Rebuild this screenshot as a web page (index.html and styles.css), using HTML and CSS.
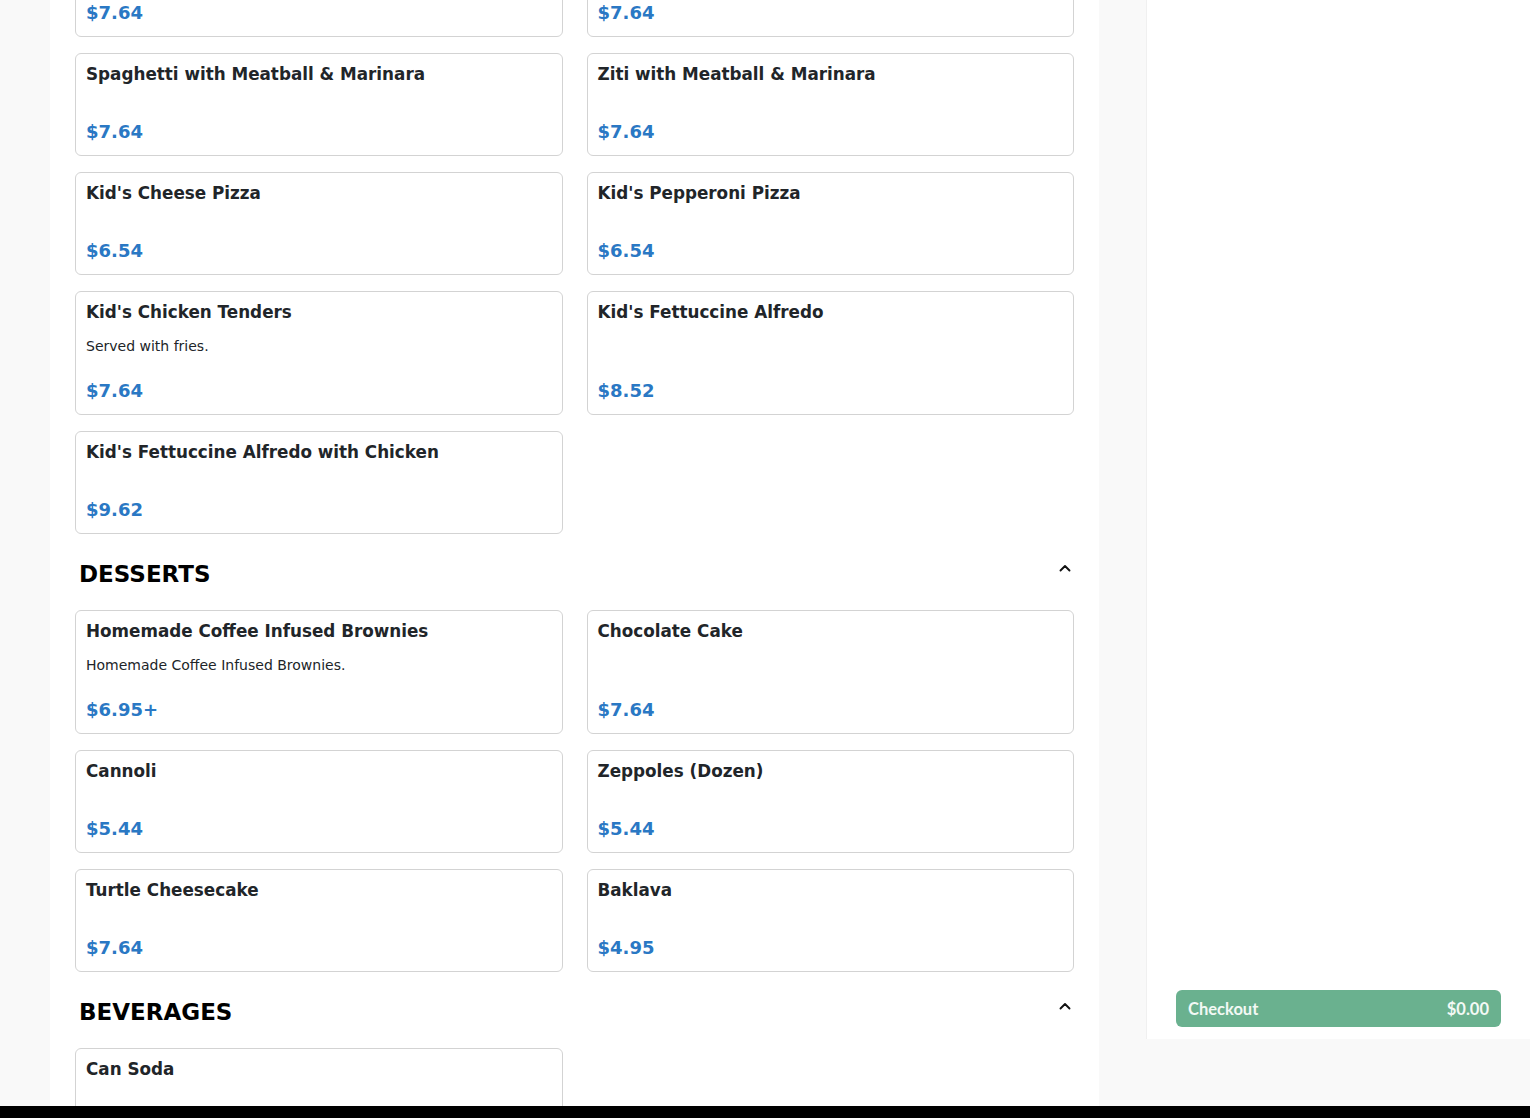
FILE: index.html
```html
<!DOCTYPE html>
<html lang="en">
<head>
<meta charset="utf-8">
<title>Menu</title>
<link rel="stylesheet" href="styles.css">
</head>
<body>
<div class="layout">
  <main class="menu">
    <div class="grid first-grid">
      <div class="card"><h3 class="title">Penne with Meatball &amp; Marinara</h3><div class="price">$7.64</div></div>
      <div class="card"><h3 class="title">Linguine with Meatball &amp; Marinara</h3><div class="price">$7.64</div></div>
      <div class="card"><h3 class="title">Spaghetti with Meatball &amp; Marinara</h3><div class="price">$7.64</div></div>
      <div class="card"><h3 class="title">Ziti with Meatball &amp; Marinara</h3><div class="price">$7.64</div></div>
      <div class="card"><h3 class="title">Kid's Cheese Pizza</h3><div class="price">$6.54</div></div>
      <div class="card"><h3 class="title">Kid's Pepperoni Pizza</h3><div class="price">$6.54</div></div>
      <div class="card"><h3 class="title">Kid's Chicken Tenders</h3><p class="desc">Served with fries.</p><div class="price">$7.64</div></div>
      <div class="card"><h3 class="title">Kid's Fettuccine Alfredo</h3><div class="price">$8.52</div></div>
      <div class="card"><h3 class="title">Kid's Fettuccine Alfredo with Chicken</h3><div class="price">$9.62</div></div>
    </div>

    <div class="section-head">
      <h2 class="section-title">DESSERTS</h2>
      <svg class="chevron" width="14" height="10" viewBox="0 0 14 10"><path d="M2.5 7.5 L7 3 L11.5 7.5" fill="none" stroke="#111" stroke-width="1.9" stroke-linecap="round" stroke-linejoin="round"/></svg>
    </div>
    <div class="grid">
      <div class="card"><h3 class="title">Homemade Coffee Infused Brownies</h3><p class="desc">Homemade Coffee Infused Brownies.</p><div class="price">$6.95+</div></div>
      <div class="card"><h3 class="title">Chocolate Cake</h3><div class="price">$7.64</div></div>
      <div class="card"><h3 class="title">Cannoli</h3><div class="price">$5.44</div></div>
      <div class="card"><h3 class="title">Zeppoles (Dozen)</h3><div class="price">$5.44</div></div>
      <div class="card"><h3 class="title">Turtle Cheesecake</h3><div class="price">$7.64</div></div>
      <div class="card"><h3 class="title">Baklava</h3><div class="price">$4.95</div></div>
    </div>

    <div class="section-head">
      <h2 class="section-title">BEVERAGES</h2>
      <svg class="chevron" width="14" height="10" viewBox="0 0 14 10"><path d="M2.5 7.5 L7 3 L11.5 7.5" fill="none" stroke="#111" stroke-width="1.9" stroke-linecap="round" stroke-linejoin="round"/></svg>
    </div>
    <div class="grid">
      <div class="card"><h3 class="title">Can Soda</h3><div class="price">$1.95</div></div>
    </div>
  </main>

  <aside class="sidebar">
    <button class="checkout"><span>Checkout</span><span>$0.00</span></button>
  </aside>
</div>
<div class="bottom-bar"></div>
</body>
</html>
```

FILE: styles.css
```css
html, body {
  margin: 0;
  padding: 0;
}
body {
  background: #f9f9f9;
  font-family: "DejaVu Sans", sans-serif;
  color: #212529;
  overflow: hidden;
  height: 1118px;
}
.layout {
  display: flex;
  align-items: flex-start;
  padding-left: 50px;
}
.menu {
  width: 1049px;
  box-sizing: border-box;
  background: #fff;
  padding: 0 25px 40px;
  min-height: 1200px;
}
.grid {
  display: grid;
  grid-template-columns: 1fr 1fr;
  column-gap: 24px;
  row-gap: 16px;
}
.first-grid {
  margin-top: -66px;
}
.card {
  display: flex;
  flex-direction: column;
  border: 1px solid #d3d3d3;
  border-radius: 6px;
  padding: 9px 10px 12px;
  background: #fff;
}
.title {
  margin: 0 0 13px;
  font-size: 16.8px;
  line-height: 22px;
  font-weight: bold;
  color: #212529;
}
.desc {
  margin: 0;
  font-size: 14px;
  line-height: 21px;
  color: #212529;
}
.price {
  margin-top: auto;
  padding-top: 22px;
  font-size: 18px;
  line-height: 23px;
  font-weight: bold;
  color: #2a78c4;
}
.section-head {
  display: flex;
  justify-content: space-between;
  align-items: flex-start;
  padding: 26px 0 21px 4px;
}
.section-title {
  margin: 0;
  font-size: 23px;
  line-height: 29px;
  font-weight: bold;
  color: #000;
}
.chevron {
  margin-top: 3px;
  margin-right: 2px;
}
.sidebar {
  width: 384px;
  height: 1039px;
  margin-left: 47px;
  box-sizing: border-box;
  background: #fff;
  border-left: 1px solid #f0f0f0;
  display: flex;
  flex-direction: column;
  justify-content: flex-end;
  padding: 0 29px 12px 29px;
}
.checkout {
  display: flex;
  justify-content: space-between;
  align-items: center;
  width: 100%;
  height: 37px;
  border: none;
  border-radius: 6px;
  background: #6ab18f;
  color: #f3f9f5;
  font-family: "Lato", "Open Sans", sans-serif;
  font-weight: bold;
  font-size: 16.5px;
  padding: 0 12px;
}
.bottom-bar {
  position: fixed;
  left: 0;
  right: 0;
  bottom: 0;
  height: 12px;
  background: #000;
}
```
